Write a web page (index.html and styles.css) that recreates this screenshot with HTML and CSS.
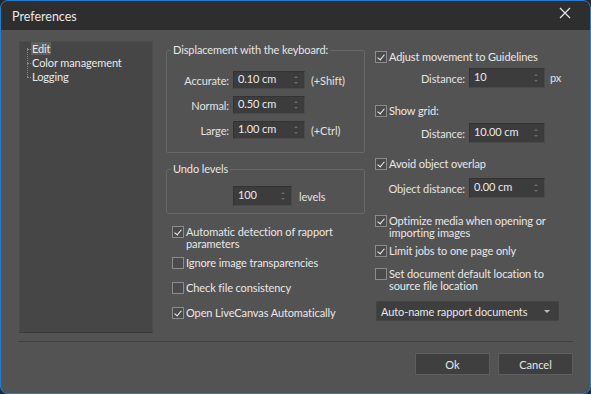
FILE: index.html
```html
<!DOCTYPE html>
<html>
<head>
<meta charset="utf-8">
<link rel="stylesheet" href="styles.css">
</head>
<body>
<div class="window">
  <div class="titlebar">
    <span class="title">Preferences</span>
    <svg class="close" width="12" height="12" viewBox="0 0 12 12"><path d="M1 1L11 11M11 1L1 11" stroke="#e8e8e8" stroke-width="1.2"/></svg>
  </div>
  <div class="content">
    <div class="tree">
      <div class="tree-lines"></div>
      <div class="tree-item selected"><span>Edit</span></div>
      <div class="tree-item"><span>Color management</span></div>
      <div class="tree-item last"><span>Logging</span></div>
    </div>
    <div class="col-left">
      <fieldset class="group disp">
        <legend>Displacement with the keyboard:</legend>
        <div class="row"><label class="lbl">Accurate:</label><div class="spin"><span>0.10 cm</span><div class="arrows"><i class="up"></i><i class="down"></i></div></div><span class="suffix">(+Shift)</span></div>
        <div class="row"><label class="lbl">Normal:</label><div class="spin"><span>0.50 cm</span><div class="arrows"><i class="up"></i><i class="down"></i></div></div></div>
        <div class="row"><label class="lbl">Large:</label><div class="spin"><span>1.00 cm</span><div class="arrows"><i class="up"></i><i class="down"></i></div></div><span class="suffix">(+Ctrl)</span></div>
      </fieldset>
      <fieldset class="group undo">
        <legend>Undo levels</legend>
        <div class="row undo-row"><div class="spin short"><span>100</span><div class="arrows"><i class="up"></i><i class="down"></i></div></div><span class="suffix lv">levels</span></div>
      </fieldset>
      <div class="checks">
        <div class="check c-auto"><span class="box on"></span><span class="ctext">Automatic detection of rapport<br>parameters</span></div>
        <div class="check c-ign"><span class="box"></span><span class="ctext">Ignore image transparencies</span></div>
        <div class="check c-chk"><span class="box"></span><span class="ctext">Check file consistency</span></div>
        <div class="check c-open"><span class="box on"></span><span class="ctext">Open LiveCanvas Automatically</span></div>
      </div>
    </div>
    <div class="col-right">
      <div class="check c-adjust"><span class="box on"></span><span class="ctext">Adjust movement to Guidelines</span></div>
      <div class="row r-field r1"><label class="lbl wide">Distance:</label><div class="spin wide"><span>10</span><div class="arrows"><i class="up"></i><i class="down"></i></div></div><span class="suffix px">px</span></div>
      <div class="check c-grid"><span class="box on"></span><span class="ctext">Show grid:</span></div>
      <div class="row r-field r2"><label class="lbl wide">Distance:</label><div class="spin wide"><span>10.00 cm</span><div class="arrows"><i class="up"></i><i class="down"></i></div></div></div>
      <div class="check c-avoid"><span class="box on"></span><span class="ctext">Avoid object overlap</span></div>
      <div class="row r-field r3"><label class="lbl wide">Object distance:</label><div class="spin wide"><span>0.00 cm</span><div class="arrows"><i class="up"></i><i class="down"></i></div></div></div>
      <div class="check c-opt"><span class="box on"></span><span class="ctext">Optimize media when opening or<br>importing images</span></div>
      <div class="check c-limit"><span class="box on"></span><span class="ctext">Limit jobs to one page only</span></div>
      <div class="check c-set"><span class="box"></span><span class="ctext">Set document default location to<br>source file location</span></div>
      <div class="combo"><span>Auto-name rapport documents</span><i class="caret"></i></div>
    </div>
  </div>
  <div class="separator"></div>
  <div class="buttons">
    <button class="btn">Ok</button>
    <button class="btn">Cancel</button>
  </div>
</div>
</body>
</html>
```

FILE: styles.css
```css
* { box-sizing: border-box; }
html, body { margin: 0; padding: 0; }
body {
  width: 591px;
  height: 394px;
  background: #1e2a36;
  font-family: Lato, "Noto Sans", sans-serif;
  font-size: 11px;
  letter-spacing: -0.1px;
  color: #e8e8e8;
  overflow: hidden;
}
.window {
  width: 591px;
  height: 394px;
  border: 1px solid #1f7fd6;
  border-radius: 8px;
  background: #535353;
  overflow: hidden;
  display: flex;
  flex-direction: column;
}
.titlebar {
  height: 29px;
  background: #2e2e2e;
  display: flex;
  align-items: center;
  justify-content: space-between;
  padding: 0 19px 0 11px;
  flex: none;
}
.title { font-size: 12.5px; color: #e8e8e8; padding-top: 2px; letter-spacing: 0; }
.close { margin-top: -6px; }
.content {
  display: flex;
  padding: 11px 0 0 18px;
  height: 302px;
  flex: none;
}
.tree {
  position: relative;
  width: 134px;
  height: 292px;
  background: #464646;
  border: 1px solid #4c4c4c;
  border-bottom: 1px solid #3a3a3a;
  padding: 0 0 0 11px;
  flex: none;
}
.tree-lines {
  position: absolute;
  left: 7px;
  top: 6px;
  width: 1px;
  height: 29px;
  border-left: 1px dotted #8a8a8a;
}
.tree-item {
  position: relative;
  height: 14px;
  line-height: 14px;
  color: #e8e8e8;
}
.tree-item::before {
  content: "";
  position: absolute;
  left: -4px;
  top: 7px;
  width: 4px;
  border-top: 1px dotted #8a8a8a;
}
.tree-item span { padding: 0 1px; }
.tree-item.selected span { background: #5f5f5f; }
.col-left {
  width: 199px;
  margin-left: 13px;
  margin-top: 2px;
  flex: none;
}
.group {
  display: block;
  width: 199px;
  margin: 0;
  border: 1px solid #676767;
  border-radius: 2px;
  padding: 0;
  min-width: 0;
}
.group legend {
  padding: 0 2px;
  margin-left: 4px;
  color: #e6e6e6;
  line-height: 14px;
  height: 14px;
}
.disp { height: 110px; padding-top: 14px; }
.undo { height: 52px; margin-top: 9px; padding-top: 10px; }
.row {
  display: flex;
  align-items: center;
  height: 18px;
  margin-bottom: 7px;
}
.lbl {
  width: 66px;
  text-align: right;
  padding-right: 4px;
  color: #e2e2e2;
}
.spin {
  width: 72px;
  height: 18px;
  background: #3c3c3c;
  border-top: 1px solid #333;
  border-left: 1px solid #333;
  border-bottom: 1px solid #4a4a4a;
  border-right: 1px solid #4a4a4a;
  display: flex;
  align-items: center;
  justify-content: space-between;
  padding-left: 4px;
  color: #eaeaea;
}
.spin span { margin-top: -3px; }
.spin.short { width: 59px; height: 20px; }
.undo-row { padding-left: 66px; height: 20px; }
.arrows {
  width: 16px;
  height: 100%;
  display: flex;
  flex-direction: column;
  justify-content: center;
  align-items: center;
  gap: 4px;
}
.arrows i {
  display: block;
  width: 0;
  height: 0;
  border-left: 2px solid transparent;
  border-right: 2px solid transparent;
}
.arrows .up { border-bottom: 2px solid #6a6a6a; }
.arrows .down { border-top: 2px solid #6a6a6a; }
.suffix { margin-left: 6px; color: #e2e2e2; }
.suffix.lv { margin-left: 7px; }
.suffix.px { margin-left: 5px; margin-top: -2px; }
.checks { margin-top: 12px; padding-left: 6px; }
.check {
  display: flex;
  align-items: flex-start;
  line-height: 12px;
  white-space: nowrap;
}
.c-ign { margin-top: 7px; }
.c-chk { margin-top: 13px; }
.c-open { margin-top: 13px; }
.box {
  width: 12px;
  height: 12px;
  border: 1px solid #8c8c8c;
  background: #4b4b4b;
  flex: none;
  margin-right: 2px;
  position: relative;
}
.box.on::after {
  content: "";
  position: absolute;
  left: 3px;
  top: 1px;
  width: 3px;
  height: 6px;
  border-right: 1.5px solid #f2f2f2;
  border-bottom: 1.5px solid #f2f2f2;
  transform: rotate(40deg);
}
.ctext { color: #e8e8e8; }
.col-right {
  width: 200px;
  margin-left: 10px;
  margin-top: 10px;
  flex: none;
}
.r-field { height: 20px; margin-bottom: 0; }
.r1 { margin-top: 5px; }
.r2 { margin-top: 6px; }
.r3 { margin-top: 8px; }
.lbl.wide { width: 94px; padding-right: 4px; }
.spin.wide { width: 76px; height: 20px; }
.c-grid { margin-top: 17px; }
.c-avoid { margin-top: 15px; }
.c-opt { margin-top: 17px; }
.c-limit { margin-top: 6px; }
.c-set { margin-top: 11px; }
.combo {
  margin-top: 9px;
  margin-left: 1px;
  width: 183px;
  height: 20px;
  background: #3e3e3e;
  border: 1px solid #444;
  display: flex;
  align-items: center;
  justify-content: space-between;
  padding: 0 8px 0 4px;
  color: #e6e6e6;
  white-space: nowrap;
}
.caret {
  display: block;
  width: 0;
  height: 0;
  border-left: 3px solid transparent;
  border-right: 3px solid transparent;
  border-top: 3px solid #bdbdbd;
}
.separator {
  height: 1px;
  background: #404040;
  margin: 9px 17px 0 17px;
}
.buttons {
  display: flex;
  justify-content: flex-end;
  gap: 8px;
  padding: 11px 17px 0 0;
}
.btn {
  width: 75px;
  height: 22px;
  background: #3f3f3f;
  border: 1px solid #5e5e5e;
  color: #e6e6e6;
  font-family: inherit;
  font-size: 11px;
  padding: 0;
}
```
